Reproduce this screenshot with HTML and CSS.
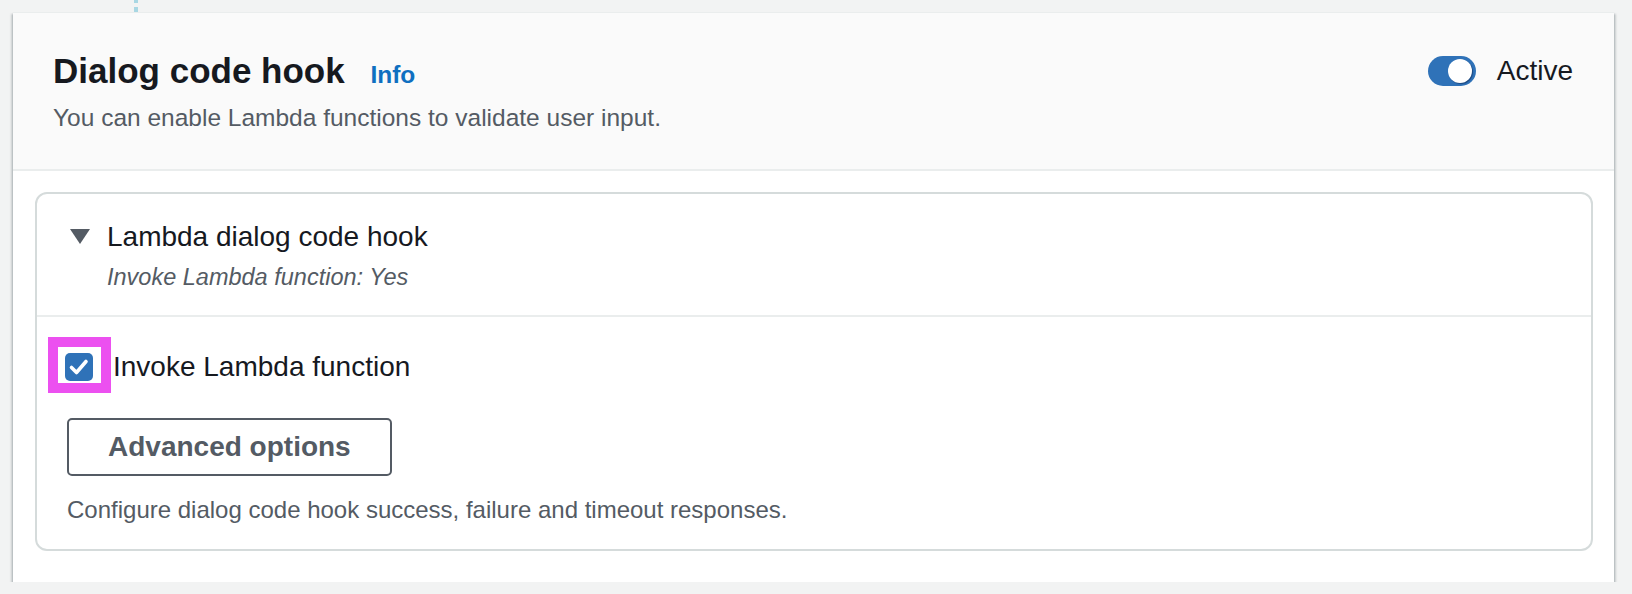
FILE: index.html
```html
<!DOCTYPE html>
<html lang="en">
  <head>
    <meta charset="UTF-8" />
    <meta name="viewport" content="width=device-width, initial-scale=1.0" />
    <title>Dialog code hook</title>
    <link rel="stylesheet" href="styles.css">
  </head>
  <body>
    <div class="page">
      <div class="connector"></div>
      <section class="card">
        <header class="card-header">
          <div class="card-title">
            <h2>Dialog code hook <a class="info-link" href="#">Info</a></h2>
            <p class="card-description">You can enable Lambda functions to validate user input.</p>
          </div>
          <label class="toggle-row">
            <span class="toggle"><span class="toggle-knob"></span></span>
            <span class="toggle-label">Active</span>
          </label>
        </header>

        <div class="card-body">
          <div class="expandable">
            <div class="expandable-header">
              <svg class="caret" width="20" height="16" viewBox="0 0 20 16">
                <polygon points="0,0 20,0 10,15" fill="#545b64" />
              </svg>
              <span class="expandable-title">Lambda dialog code hook</span>
              <span class="expandable-summary">Invoke Lambda function: Yes</span>
            </div>

            <div class="expandable-content">
              <label class="checkbox-row">
                <span class="highlight">
                  <span class="checkbox">
                    <svg width="28" height="28" viewBox="0 0 28 28">
                      <polyline points="6.5,14.5 11.5,19.5 21,8.5" fill="none" stroke="#fff" stroke-width="3.6" stroke-linecap="round" stroke-linejoin="round" />
                    </svg>
                  </span>
                </span>
                <span class="checkbox-label">Invoke Lambda function</span>
              </label>
              <button class="btn-normal">Advanced options</button>
              <p class="hint">Configure dialog code hook success, failure and timeout responses.</p>
            </div>
          </div>
        </div>
      </section>
    </div>
  </body>
</html>
```

FILE: styles.css
```css
body {
  margin: 0;
  background-color: #f2f3f3;
  font-family: "Liberation Sans", Arial, sans-serif;
  color: #16191f;
}

.page {
  padding: 0 18px 0 13px;
}

/* dotted flow line above the card */
.connector {
  width: 4px;
  height: 12px;
  margin-left: 121px;
  background: repeating-linear-gradient(to bottom, #a9d7e3 0 4px, transparent 4px 8px);
  background-position: 0 -1px;
}

.card {
  background-color: #fff;
  box-shadow: 0 2px 2px rgba(0, 28, 36, 0.3), 2px 2px 2px rgba(0, 28, 36, 0.15),
    -2px 2px 2px rgba(0, 28, 36, 0.15);
}

.card-header {
  display: flex;
  justify-content: space-between;
  align-items: flex-start;
  padding: 36px 41px 34px 40px;
  background-color: #fafafa;
  border-top: 1px solid #eaeded;
  border-bottom: 2px solid #eaeded;
}

.card-header h2 {
  margin: 0;
  font-size: 35px;
  line-height: 44px;
  font-weight: bold;
}

.info-link {
  margin-left: 16px;
  font-size: 24.5px;
  line-height: 1;
  color: #0f6fc0;
  text-decoration: none;
}

.card-description {
  margin: 8px 0 0;
  font-size: 24.5px;
  line-height: 34px;
  color: #545b64;
}

.toggle-row {
  display: flex;
  align-items: center;
  gap: 21px;
  height: 44px;
}

.toggle {
  display: flex;
  justify-content: flex-end;
  align-items: center;
  width: 48px;
  height: 30px;
  padding: 0 4px;
  box-sizing: border-box;
  border-radius: 15px;
  background-color: #2f72b8;
}

.toggle-knob {
  width: 24px;
  height: 24px;
  border-radius: 50%;
  background-color: #fff;
  box-shadow: 1px 1px 1px rgba(0, 20, 60, 0.45);
}

.toggle-label {
  font-size: 28px;
}

.card-body {
  padding: 21px 21px 31px 22px;
}

.expandable {
  border: 2px solid #d5dbdb;
  border-radius: 12px;
}

.expandable-header {
  display: grid;
  grid-template-columns: 37px 1fr;
  align-items: center;
  row-gap: 6px;
  padding: 25px 33px 22px;
  border-bottom: 2px solid #eaeded;
}

.caret {
  display: block;
}

.expandable-title {
  font-size: 28px;
  line-height: 36px;
}

.expandable-summary {
  grid-column: 2;
  font-size: 23.5px;
  line-height: 32px;
  font-style: italic;
  color: #545b64;
}

.expandable-content {
  padding: 20px 30px 23px;
}

.checkbox-row {
  display: flex;
  align-items: center;
  gap: 2px;
  margin-left: -19px;
}

.highlight {
  display: flex;
  padding: 6px 8px 2px 7px;
  border: 10px solid #ec50f0;
  background-color: #fff;
}

.checkbox {
  display: flex;
  width: 28px;
  height: 28px;
  border-radius: 5px;
  background-color: #2f72b8;
}

.checkbox-label {
  padding-top: 4px;
  font-size: 28px;
  line-height: 36px;
}

.btn-normal {
  display: block;
  margin-top: 25px;
  height: 58px;
  padding: 0 39px;
  border: 2px solid #545b64;
  border-radius: 5px;
  background-color: #fff;
  color: #545b64;
  font-family: inherit;
  font-size: 28px;
  font-weight: bold;
}

.hint {
  margin: 18px 0 0;
  font-size: 24px;
  line-height: 32px;
  color: #545b64;
}
```
